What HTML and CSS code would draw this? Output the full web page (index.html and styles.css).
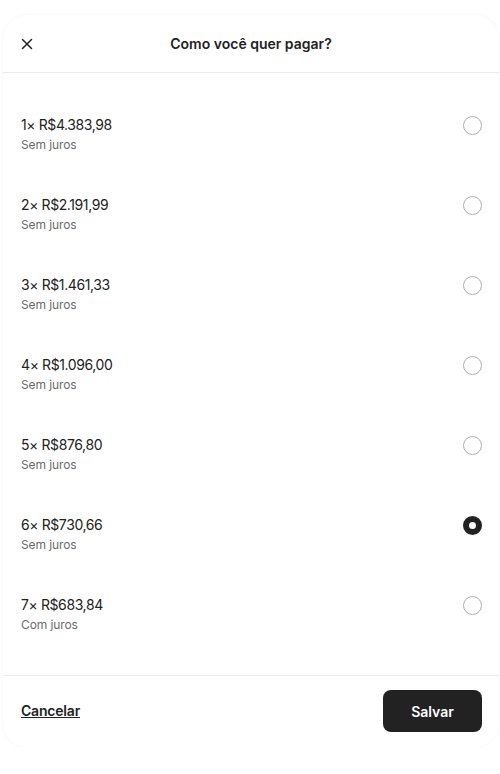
FILE: index.html
```html
<!DOCTYPE html>
<html lang="pt-BR">
<head>
    <meta charset="UTF-8">
    <meta name="viewport" content="width=device-width, initial-scale=1.0">
    <title>Como você quer pagar?</title>
    <link rel="stylesheet" href="styles.css">
</head>
<body>
<div class="modal">
    <div class="modal-header">
        <button class="close-button" aria-label="Fechar">
            <svg width="16" height="16" viewBox="0 0 16 16"><path d="M3.5 3.5 L12.5 12.5 M12.5 3.5 L3.5 12.5" stroke="#222" stroke-width="1.5" stroke-linecap="round" fill="none"/></svg>
        </button>
        <h1 class="modal-title">Como você quer pagar?</h1>
    </div>

    <!-- opções de parcelamento -->
    <div class="option-list">
        <label class="option">
            <div class="option-text">
                <div class="option-price">1× R$4.383,98</div>
                <div class="option-note">Sem juros</div>
            </div>
            <span class="radio"></span>
        </label>
        <label class="option">
            <div class="option-text">
                <div class="option-price">2× R$2.191,99</div>
                <div class="option-note">Sem juros</div>
            </div>
            <span class="radio"></span>
        </label>
        <label class="option">
            <div class="option-text">
                <div class="option-price">3× R$1.461,33</div>
                <div class="option-note">Sem juros</div>
            </div>
            <span class="radio"></span>
        </label>
        <label class="option">
            <div class="option-text">
                <div class="option-price">4× R$1.096,00</div>
                <div class="option-note">Sem juros</div>
            </div>
            <span class="radio"></span>
        </label>
        <label class="option">
            <div class="option-text">
                <div class="option-price">5× R$876,80</div>
                <div class="option-note">Sem juros</div>
            </div>
            <span class="radio"></span>
        </label>
        <label class="option">
            <div class="option-text">
                <div class="option-price">6× R$730,66</div>
                <div class="option-note">Sem juros</div>
            </div>
            <span class="radio checked"></span>
        </label>
        <label class="option">
            <div class="option-text">
                <div class="option-price">7× R$683,84</div>
                <div class="option-note">Com juros</div>
            </div>
            <span class="radio"></span>
        </label>
    </div>

    <div class="modal-footer">
        <a class="cancel-link" href="#">Cancelar</a>
        <button class="save-button">Salvar</button>
    </div>
</div>
</body>
</html>
```

FILE: styles.css
```css
* { margin: 0; padding: 0; box-sizing: border-box; }
body {
    font-family: Inter, 'Noto Sans', sans-serif;
    background: #fff;
    color: #222;
    padding: 15px 1px 0 3px;
}
.modal {
    background: #fff;
    border-radius: 24px;
    box-shadow: 0 0 3px rgba(0, 0, 0, 0.05);
    height: 732px;
    display: flex;
    flex-direction: column;
}
.modal-header {
    height: 58px;
    border-bottom: 1px solid #ebebeb;
    display: flex;
    align-items: center;
    justify-content: center;
    position: relative;
}
.close-button {
    position: absolute;
    left: 16px;
    top: 21px;
    width: 16px;
    height: 16px;
    border: none;
    background: none;
    display: flex;
}
.modal-title { font-size: 14px; font-weight: 600; }
.option-list { padding: 22px 17px 20px 18px; }
.option {
    display: flex;
    justify-content: space-between;
    align-items: flex-start;
    height: 80px;
    padding-top: 20px;
}
.option-price { font-size: 14px; line-height: 20px; letter-spacing: -0.4px; }
.option-note { font-size: 12px; line-height: 20px; color: #6a6a6a; letter-spacing: -0.1px; }
.radio {
    width: 19px;
    height: 19px;
    margin-top: 0.5px;
    border-radius: 50%;
    border: 1px solid #b0b0b0;
}
.radio.checked { border: 6px solid #222; }
.modal-footer {
    flex: 1;
    border-top: 1px solid #ebebeb;
    display: flex;
    justify-content: space-between;
    align-items: flex-start;
    padding: 14px 17px 0 18px;
}
.cancel-link {
    color: #222;
    font-size: 14px;
    font-weight: 600;
    line-height: 42px;
    letter-spacing: -0.2px;
    text-decoration: underline;
}
.save-button {
    background: #222;
    color: #fff;
    border: none;
    border-radius: 8px;
    width: 99px;
    height: 42px;
    font-family: inherit;
    font-size: 14px;
    font-weight: 600;
}
```
